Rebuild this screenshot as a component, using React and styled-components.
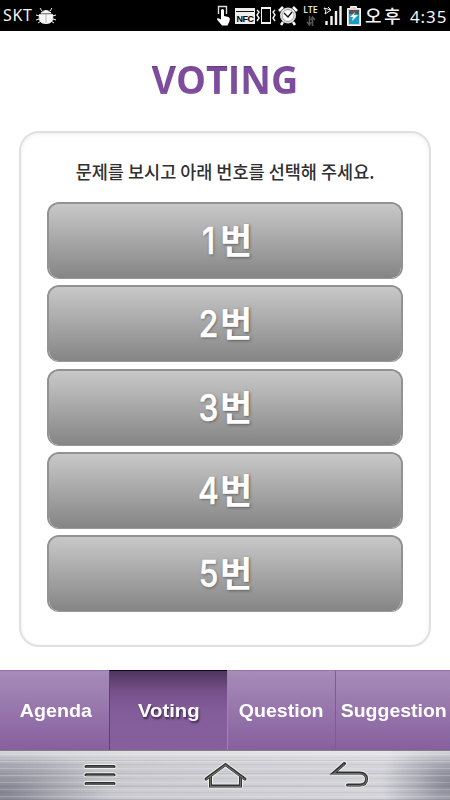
import React from "react";
import styled, { createGlobalStyle } from "styled-components";

const Global = createGlobalStyle`
  body { margin: 0; background: #fff; }
  * { box-sizing: border-box; }
`;

const Screen = styled.div`
  width: 450px;
  height: 800px;
  display: flex;
  flex-direction: column;
  overflow: hidden;
  background: #fff;
  font-family: "Liberation Sans", "Noto Sans CJK KR", sans-serif;
`;

const StatusBar = styled.header`
  height: 31px;
  flex: none;
  display: flex;
  align-items: flex-start;
  background: #000;
  color: #f4f4f4;
`;

const Carrier = styled.span`
  width: 35px;
  padding: 5px 0 0 3px;
  font: 400 16px/20px "Noto Sans", sans-serif;
  letter-spacing: 0.7px;
  white-space: nowrap;
`;

const StatusIcon = styled.svg`
  display: block;
  flex: none;
  height: 31px;
  width: ${(p) => p.$w}px;
  margin-left: ${(p) => p.$gap || 0}px;
`;

const Meridiem = styled.span`
  width: 40px;
  margin-left: 4px;
  font: 500 18px/31px "Noto Sans CJK KR", sans-serif;
  letter-spacing: 2.5px;
  white-space: nowrap;
`;

const Clock = styled.span`
  margin-left: 5px;
  padding-top: 7px;
  font: 400 17px/20px "Noto Sans", sans-serif;
  letter-spacing: 0.9px;
  white-space: nowrap;
`;

const Main = styled.main`
  flex: 1;
  display: flex;
  flex-direction: column;
  align-items: center;
`;

const Title = styled.h1`
  margin: 20px 0 0;
  height: 80px;
  font: 700 40px/56px "Open Sans", sans-serif;
  color: #7c4b9c;
  background: linear-gradient(#4d1f70 13px, #7d4c9d 17px, #7d4c9d 40px, #8b60a6 44px);
  background-size: 100% 56px;
  -webkit-background-clip: text;
  -webkit-text-fill-color: transparent;
  transform: scaleX(${(p) => p.$stretch});
`;

const Panel = styled.section`
  width: 412px;
  height: 516px;
  padding: 24px 26px 0;
  border: 2px solid #e0e0e0;
  border-radius: 20px;
  box-shadow: inset 0 1px 4px #ededed;
  display: flex;
  flex-direction: column;
  align-items: center;
`;

const Prompt = styled.p`
  margin: 0 0 17px;
  height: 28px;
  font: 500 18px/28px "Noto Sans CJK KR", sans-serif;
  color: #303030;
  white-space: nowrap;
  transform: translateX(0.5px) scaleX(${(p) => p.$stretch});
`;

const Choices = styled.div`
  width: 356px;
  display: grid;
  gap: 6.3px;
`;

const Choice = styled.button`
  height: 77px;
  padding: 0 0 4px;
  display: flex;
  justify-content: center;
  align-items: center;
  border: 2px solid #929292;
  border-bottom: 1px solid #999;
  border-radius: 12px;
  background: linear-gradient(#c8c8c8, #858585) padding-box;
  color: #fff;
  text-shadow: 1px 1px 3px rgba(60, 60, 60, 0.65);
`;

const Digit = styled.span`
  width: 21px;
  display: flex;
  justify-content: center;
  font: 500 37px/44px "Inter", sans-serif;
  -webkit-text-stroke: 0.5px #fff;
  transform: translateY(2px) scaleX(0.86);
`;

const Unit = styled.span`
  margin-left: 1px;
  font: 700 35px/44px "Noto Sans CJK KR", sans-serif;
`;

const Tabs = styled.nav`
  flex: none;
  height: 80px;
  display: grid;
  grid-template-columns: 109px 118px 108px 115px;
`;

const Tab = styled.button`
  padding: 0 0 0 ${(p) => p.$shift || 0}px;
  display: flex;
  align-items: center;
  justify-content: center;
  border: 0;
  border-left: ${(p) => (p.$edge ? `1px solid ${p.$edge}` : "0")};
  border-top: 1px solid ${(p) => (p.$active ? "#0d0624" : "#9875ab")};
  background: ${(p) =>
    p.$active
      ? "linear-gradient(#4e355d, #755089 20px, #835d99 40px, #85609d)"
      : "linear-gradient(#a78bb9, #86609e)"};
  color: #fff;
  font: 700 19px/24px "Liberation Sans", sans-serif;
  white-space: nowrap;
  text-shadow: ${(p) => (p.$active ? "1px 2px 2px #3f2850" : "0 0 2px #9576ab")};
`;

const TabLabel = styled.span`
  transform: scaleX(${(p) => p.$stretch});
`;

const SystemBar = styled.footer`
  flex: none;
  height: 50px;
  padding-bottom: 2px;
  display: flex;
  align-items: center;
  border-top: 1px solid #828087;
  background:
    linear-gradient(rgba(255,255,255,.45), transparent 14px),
    repeating-linear-gradient(transparent 0 3px, rgba(255,255,255,.2) 3px 4px, transparent 4px 6px, rgba(70,70,90,.07) 6px 7px),
    repeating-linear-gradient(transparent 0 9px, rgba(70,70,90,.12) 9px 10px, transparent 10px 13px),
    radial-gradient(ellipse 110px 46px at 0 85%, rgba(95,95,112,.6), rgba(95,95,112,.25) 50%, transparent),
    radial-gradient(ellipse 70px 42px at 100% 65%, rgba(95,95,112,.55), rgba(95,95,112,.2) 50%, transparent),
    linear-gradient(90deg, #b9b9c2, #cbcbd0 30%, #d0d0d5 55%, #d4d4d9 85%, #b8b8c2);
`;

const NavIcon = styled.svg`
  display: block;
  flex: none;
  width: ${(p) => p.$w}px;
  height: 34px;
  margin-left: ${(p) => p.$gap}px;
  fill: none;
`;

function Etched({ d }) {
  return (
    <>
      <path d={d} stroke="#eeeeed" strokeWidth="5" strokeLinejoin="round" strokeLinecap="round" />
      <path d={d} stroke="#303231" strokeWidth="3" strokeLinecap="round" />
      <path d={d} stroke="#6b6e6b" strokeWidth="1.2" transform="translate(0 .6)" />
    </>
  );
}

function Bug() {
  return (
    <StatusIcon $w={22} viewBox="35 0 22 31">
      <g fill="#f5f5f5" stroke="#f5f5f5">
        <path d="M41 13q5-5 10 0z" />
        <path d="M39.5 14.5h13q2 9-6.5 9t-6.5-9z" />
        <path d="m42 11-2-3m10 3 2-3M40 16l-4-1m3 4-3 1m5 1-3 2m14-7 4-1m-3 4 3 1m-5 1 3 2" fill="none" />
      </g>
      <path d="M40 14h12M46 14v9" stroke="#999" strokeWidth=".7" />
    </StatusIcon>
  );
}

function Touch() {
  return (
    <StatusIcon $w={15} $gap={159} viewBox="216 0 15 31">
      <path d="M218.5 14V6.5h8V14" fill="none" stroke="#ddd" strokeWidth="1.4" />
      <path d="M221 10q1.5-2 3 0v6l4.5 1q2 1 1 4l-2 4.5h-5.5l-5-6q0-2 2-1l2 1z" fill="#fff" />
    </StatusIcon>
  );
}

const NfcBox = styled.span`
  width: 20px;
  height: 16px;
  margin: 8px 0 0 4px;
  padding-top: 4px;
  border: 1px solid #eee;
  border-top-width: 3px;
  background: linear-gradient(#111 1px, #eee 1px);
  color: #000;
  font: 700 9px/8px "Liberation Sans", sans-serif;
  text-align: center;
  letter-spacing: -0.5px;
`;

const Network = styled.span`
  width: 17px;
  height: 31px;
  margin-left: 4px;
  padding-top: 5px;
  display: flex;
  flex-direction: column;
  align-items: center;
  font: 500 9px/10px "Noto Sans", sans-serif;
`;

const DataArrows = styled.svg`
  width: 10px;
  height: 10px;
  margin-top: 1px;
`;

const choices = [1, 2, 3, 4, 5];

export default function App() {
  return (
    <>
      <Global />
      <Screen>
        <StatusBar>
          <Carrier>SKT</Carrier>
          <Bug />
          <Touch />
          <NfcBox>NFC</NfcBox>
          <StatusIcon $w={22} viewBox="255 0 22 31" fill="none" stroke="#f4f4f4">
            <path d="M261.5 8.5h9v14h-9z" />
            <path d="M261 8h10M261 23h10" strokeWidth="2" />
            <path d="m257 10 2 2-2 3 2 3-2 3M275 10l-2 2 2 3-2 3 2 3" strokeWidth="1.4" />
          </StatusIcon>
          <StatusIcon $w={20} $gap={1} viewBox="278 0 20 31">
            <circle cx="288" cy="15.5" r="7.5" fill="#fff" stroke="#ddd" />
            <circle cx="288" cy="15.5" r="6" fill="none" stroke="#777" strokeWidth=".8" />
            <path d="m284 13 4 4 4-5" fill="none" stroke="#111" strokeWidth="1.3" />
            <path d="m279 11 4-4m10 0 4 4M283 22l-2 3m12-3 2 3" stroke="#fff" strokeWidth="2.5" />
          </StatusIcon>
          <Network>
            LTE
            <DataArrows viewBox="0 0 10 10">
              <path d="M3.5 0v8M1 6l2.5 3L5 6M6.5 10V2M5 4l1.5-3L9 4" fill="none" stroke="#555" strokeWidth="1.6" />
            </DataArrows>
          </Network>
          <StatusIcon $w={19} $gap={4} viewBox="323 0 19 31" stroke="#f3f3f3" fill="none">
            <path d="M326.5 21v4M331.5 16v9M336 11v14M340.5 6v19" strokeWidth="2.4" />
            <path d="m325 14 1-3-2-3 7 2-3 2zM328 7l3 3" />
          </StatusIcon>
          <StatusIcon $w={14} $gap={5} viewBox="347 0 14 31">
            <path d="M347.5 8.5h3v-2h6v2h4v17h-13z" fill="#d6d6d6" stroke="#fff" />
            <path d="M349 10h10v5h-10z" fill="#555" />
            <path d="M349 14h10v10h-10z" fill="#189fc2" />
            <path d="m355 12-5 5h3l-1 4 6-6h-4z" fill="#fff" />
          </StatusIcon>
          <Meridiem>오후</Meridiem>
          <Clock>4:35</Clock>
        </StatusBar>
        <Main>
          <Title $stretch={0.943}>VOTING</Title>
          <Panel>
            <Prompt $stretch={0.973}>문제를 보시고 아래 번호를 선택해 주세요.</Prompt>
            <Choices>
              {choices.map((n) => (
                <Choice key={n}>
                  <Digit>{n}</Digit>
                  <Unit>번</Unit>
                </Choice>
              ))}
            </Choices>
          </Panel>
        </Main>
        <Tabs>
          <Tab $shift={2}><TabLabel $stretch={1.035}>Agenda</TabLabel></Tab>
          <Tab $active $edge="#604073" $shift={1}><TabLabel $stretch={1.07}>Voting</TabLabel></Tab>
          <Tab $edge="#a083b4"><TabLabel $stretch={1.03}>Question</TabLabel></Tab>
          <Tab $edge="#7c5d92" $shift={2}><TabLabel $stretch={1.025}>Suggestion</TabLabel></Tab>
        </Tabs>
        <SystemBar>
          <NavIcon $w={38} $gap={81} viewBox="81 758 38 34">
            <Etched d="M86 766.5h28M86 774.8h28M86 783.5h28" />
          </NavIcon>
          <NavIcon $w={46} $gap={83} viewBox="202 758 46 34">
            <Etched d="m206 779 19.5-14.5L245 779M210.5 777v9h30v-9" />
          </NavIcon>
          <NavIcon $w={42} $gap={81} viewBox="329 758 42 34">
            <Etched d="m344.5 763.5-11 9.5h26q7 0 7 6t-7 6h-12" />
          </NavIcon>
        </SystemBar>
      </Screen>
    </>
  );
}
